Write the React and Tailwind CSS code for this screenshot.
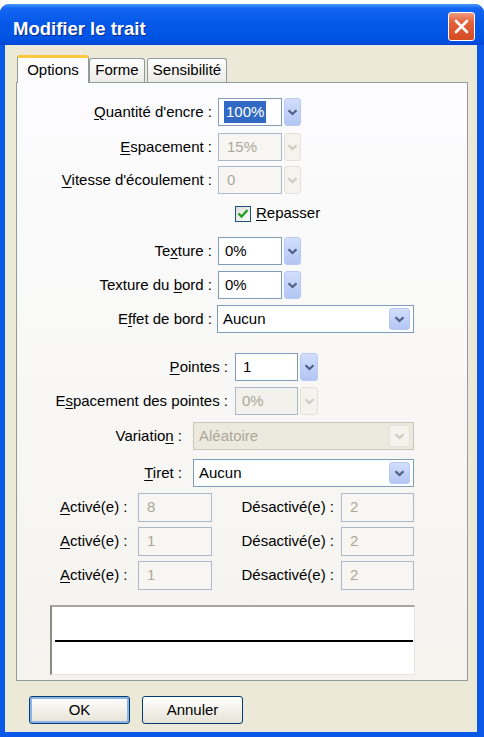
import React from "react";

/* ---------- small XP-style controls ---------- */

function Chevron({ color }) {
  return (
    <svg width="11" height="7" viewBox="0 0 11 7">
      <path d="M1.5 1.2 L5.5 5 L9.5 1.2" fill="none" stroke={color} strokeWidth="2.2" />
    </svg>
  );
}

function DropButton({ disabled, className = "" }) {
  const look = disabled
    ? "bg-[#F4F3EE] border-[#E4E2D8]"
    : "bg-gradient-to-b from-[#D2DEFB] to-[#B2C6F5] border-[#B8CAF3]";
  return (
    <div className={"flex items-center justify-center rounded-[3px] border " + look + " " + className}>
      <Chevron color={disabled ? "#CDCBBF" : "#4D6185"} />
    </div>
  );
}

function Field({ value, disabled, className = "", pad = "pl-[8px]", selected }) {
  const look = disabled
    ? "bg-[#F7F6F2] border-[#A9B8CA] text-[#ACA899]"
    : "bg-white border-[#7F9DB9] text-black";
  return (
    <div className={"flex h-full items-center border " + look + " " + pad + " " + className}>
      {selected ? <span className="bg-[#316AC5] px-[2px] text-white">{value}</span> : value}
    </div>
  );
}

function Select({ value, disabled, className = "" }) {
  const look = disabled
    ? "bg-[#ECEADF] border-[#C9C7BA] text-[#ACA899]"
    : "bg-white border-[#7F9DB9] text-black";
  return (
    <div className={"flex h-full items-center border " + look + " " + className}>
      <div className="flex-1 pl-[5px]">{value}</div>
      <DropButton disabled={disabled} className="my-[2px] mr-[3px] h-[22px] w-[21px]" />
    </div>
  );
}

const U = ({ children }) => <span className="underline underline-offset-[2px]">{children}</span>;

/* ---------- dialog ---------- */

export default function App() {
  return (
    <div className="h-[737px] w-[484px] overflow-hidden bg-white font-['Liberation_Sans',Arial,sans-serif] text-[15px] text-black">
      <div className="mt-[4px] flex h-[733px] flex-col rounded-t-[9px] bg-[#0A58E8]">
        {/* title bar */}
        <div className="flex h-[41px] items-center rounded-t-[9px] bg-[linear-gradient(180deg,#4A9BFF_0%,#1466F2_10%,#0658E8_45%,#0054E3_85%,#0346D6_100%)] pl-[13px] pr-[9px] pt-[4px]">
          <div className="mt-[4px] flex-1 text-[18.5px] font-bold text-white [text-shadow:1px_1px_#0A2A8A]">
            Modifier le trait
          </div>
          <div className="flex h-[29px] w-[27px] items-center justify-center rounded-[3px] border border-white bg-[linear-gradient(180deg,#F09A7E_0%,#E2603A_35%,#D54A22_100%)]">
            <svg width="15" height="15" viewBox="0 0 15 15">
              <path d="M2 2 L13 13 M13 2 L2 13" stroke="white" strokeWidth="2.6" strokeLinecap="round" />
            </svg>
          </div>
        </div>

        {/* body */}
        <div className="mb-[5px] ml-[5px] mr-[7px] flex-1 bg-[#ECE9D8] pt-[10px]">
          {/* tabs */}
          <div className="ml-[12px] flex h-[27px] items-end">
            <div className="relative z-10 -mb-px flex h-[28px] w-[72px] items-center justify-center rounded-t-[3px] border-x border-[#919B9C] border-t-[3px] border-t-[#FFC83C] bg-[#FCFCFE]">
              Options
            </div>
            <div className="flex h-[24px] w-[56px] items-center justify-center rounded-t-[3px] border-x border-t border-[#919B9C] bg-gradient-to-b from-white to-[#ECEBE6]">
              Forme
            </div>
            <div className="ml-[2px] flex h-[24px] w-[80px] items-center justify-center rounded-t-[3px] border-x border-t border-[#919B9C] bg-gradient-to-b from-white to-[#ECEBE6]">
              Sensibilité
            </div>
          </div>

          {/* tab page */}
          <div className="ml-[11px] flex h-[599px] w-[452px] flex-col border border-[#919B9C] bg-gradient-to-b from-[#FCFCFE] to-[#F4F3EE]">
            <div className="mt-[15px] flex h-[28px]">
              <div className="w-[201px] self-center pr-[6px] text-right">
                <U>Q</U>uantité d'encre :
              </div>
              <Field value="100%" selected pad="pl-[5px]" className="w-[64px]" />
              <DropButton className="ml-[2px] w-[17px]" />
            </div>

            <div className="mt-[7px] flex h-[28px]">
              <div className="w-[201px] self-center pr-[6px] text-right">
                <U>E</U>spacement :
              </div>
              <Field value="15%" disabled className="w-[64px]" />
              <DropButton disabled className="ml-[2px] w-[17px]" />
            </div>

            <div className="mt-[5px] flex h-[28px]">
              <div className="w-[201px] self-center pr-[6px] text-right">
                <U>V</U>itesse d'écoulement :
              </div>
              <Field value="0" disabled className="w-[64px]" />
              <DropButton disabled className="ml-[2px] w-[17px]" />
            </div>

            <div className="mt-[11px] flex h-[17px] items-center pl-[218px]">
              <div className="flex h-[16px] w-[16px] items-center justify-center border border-[#1C5180] bg-gradient-to-br from-[#DCDCD7] to-white">
                <svg width="12" height="11" viewBox="0 0 12 11">
                  <path d="M1.5 5.5 L4.5 8.5 L10.5 2" fill="none" stroke="#21A121" strokeWidth="2.4" />
                </svg>
              </div>
              <div className="ml-[5px]">
                <U>R</U>epasser
              </div>
            </div>

            <div className="mt-[15px] flex h-[28px]">
              <div className="w-[201px] self-center pr-[6px] text-right">
                Te<U>x</U>ture :
              </div>
              <Field value="0%" pad="pl-[6px]" className="w-[64px]" />
              <DropButton className="ml-[2px] w-[17px]" />
            </div>

            <div className="mt-[6px] flex h-[28px]">
              <div className="w-[201px] self-center pr-[6px] text-right">
                Texture du <U>b</U>ord :
              </div>
              <Field value="0%" pad="pl-[6px]" className="w-[64px]" />
              <DropButton className="ml-[2px] w-[17px]" />
            </div>

            <div className="mt-[6px] flex h-[28px]">
              <div className="w-[200px] self-center pr-[5px] text-right">
                E<U>f</U>fet de bord :
              </div>
              <Select value="Aucun" className="w-[197px]" />
            </div>

            <div className="mt-[20px] flex h-[28px]">
              <div className="w-[218px] self-center pr-[7px] text-right">
                <U>P</U>ointes :
              </div>
              <Field value="1" pad="pl-[7px]" className="w-[63px]" />
              <DropButton className="ml-[2px] w-[18px]" />
            </div>

            <div className="mt-[6px] flex h-[28px]">
              <div className="w-[218px] self-center pr-[7px] text-right">
                E<U>s</U>pacement des pointes :
              </div>
              <Field value="0%" disabled pad="pl-[6px]" className="w-[63px] !bg-[#F2F1EB]" />
              <DropButton disabled className="ml-[2px] w-[18px]" />
            </div>

            <div className="mt-[7px] flex h-[28px]">
              <div className="w-[176px] self-center pr-[11px] text-right">
                Variatio<U>n</U> :
              </div>
              <Select value="Aléatoire" disabled className="w-[221px]" />
            </div>

            <div className="mt-[9px] flex h-[28px]">
              <div className="w-[176px] self-center pr-[11px] text-right">
                <U>T</U>iret :
              </div>
              <Select value="Aucun" className="w-[221px]" />
            </div>

            {[["8", "2"], ["1", "2"], ["1", "2"]].map(([on, off], i) => (
              <div key={i} className={(i === 0 ? "mt-[6px]" : "mt-[5px]") + " flex h-[29px] pl-[43px]"}>
                <div className="w-[78px] self-center">
                  <U>A</U>ctivé(e) :
                </div>
                <Field value={on} disabled className="w-[74px]" />
                <div className="w-[129px] self-center pr-[7px] text-right">Désactivé(e) :</div>
                <Field value={off} disabled className="w-[73px]" />
              </div>
            ))}

            {/* stroke preview */}
            <div className="ml-[33px] mt-[15px] h-[70px] w-[365px] border-l-2 border-t-2 border-b border-r border-l-[#8A8A86] border-t-[#A7A6A0] border-b-[#E6E5DF] border-r-[#E6E5DF] bg-white">
              <div className="ml-[3px] mr-[1px] mt-[33px] h-[2px] bg-black" />
            </div>
          </div>

          {/* buttons */}
          <div className="ml-[24px] mt-[15px] flex">
            <button className="flex h-[28px] w-[101px] items-center justify-center rounded-[3px] border border-[#003C74] bg-gradient-to-b from-white to-[#E6E3D6] shadow-[inset_0_0_0_2px_#8DB2E3]">
              OK
            </button>
            <button className="ml-[12px] flex h-[28px] w-[101px] items-center justify-center rounded-[3px] border border-[#003C74] bg-gradient-to-b from-white to-[#E6E3D6]">
              Annuler
            </button>
          </div>
        </div>
      </div>
    </div>
  );
}
